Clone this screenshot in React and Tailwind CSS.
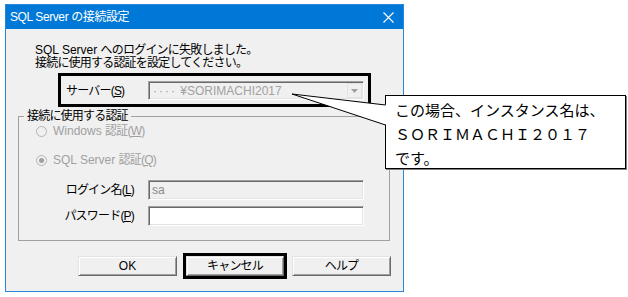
export default function App() {
  const btn =
    "flex items-center justify-center h-[20px] bg-[#f0f0f0] border border-t-[#e3e3e3] border-l-[#e3e3e3] border-r-[#696969] border-b-[#696969] shadow-[inset_1px_1px_0_#ffffff,inset_-1px_-1px_0_#a0a0a0] text-[12px] leading-none";
  const sunken =
    "border border-t-[#a0a0a0] border-l-[#a0a0a0] border-r-[#ffffff] border-b-[#ffffff] shadow-[inset_1px_1px_0_#696969,inset_-1px_-1px_0_#e3e3e3]";
  return (
    <div className="relative w-[628px] h-[297px] bg-white pt-[4px] pl-[5px] font-['Liberation_Sans','Noto_Sans_CJK_JP',sans-serif] text-[12px] text-black tracking-[-0.8px]">
      <div className="w-[399px] h-[288px] border border-[#2b86d9] bg-[#f0f0f0] flex flex-col">
        {/* title bar */}
        <div className="h-[24px] bg-[#0078d7] flex items-center justify-between pl-[4px] pr-[9px] text-white tracking-[-0.4px]">
          <span className="leading-none">SQL Server の接続設定</span>
          <svg width="11" height="11" viewBox="0 0 11 11">
            <path d="M0.5 0.5 L10.5 10.5 M10.5 0.5 L0.5 10.5" stroke="#ffffff" strokeWidth="1.1" fill="none" />
          </svg>
        </div>
        {/* message */}
        <div className="pt-[15px] pl-[29px] leading-[13px]">
          <div>
            <span className="tracking-normal">SQL Server </span>へのログインに失敗しました。
          </div>
          <div>接続に使用する認証を設定してください。</div>
        </div>
        {/* server row (highlighted) */}
        <div className="mt-[3px] ml-[52px] w-[313px] h-[34px] border-[3px] border-black flex items-center pl-[5px] pt-[1px]">
          <span className="w-[82px] leading-none">
            サーバー(<span className="underline">S</span>)
          </span>
          <div className={"w-[216px] h-[19px] bg-[#f0f0f0] flex items-center justify-between " + sunken}>
            <span className="pl-[4px] text-[#a0a0a0] leading-none tracking-normal">
              <span className="tracking-[2px]">····</span> ¥SORIMACHI2017
            </span>
            <div className="w-[15px] h-[15px] mr-[1px] bg-[#f0f0f0] border border-[#e3e3e3] flex items-center justify-center">
              <svg width="7" height="4" viewBox="0 0 7 4">
                <path d="M0 0 L7 0 L3.5 4 Z" fill="#a0a0a0" />
              </svg>
            </div>
          </div>
        </div>
        {/* group box */}
        <fieldset className="mt-[2px] ml-[12px] w-[372px] h-[132px] border border-[#a0a0a0] p-0 m-0">
          <legend className="ml-[5px] px-[3px] leading-[14px]">接続に使用する認証</legend>
          <div className="flex flex-col pl-[17px] text-[#a0a0a0]">
            <div className="h-[16px] flex items-center gap-[6px]">
              <span className="w-[11px] h-[11px] rounded-full border border-[#b5b5b5] bg-[#f0f0f0]" />
              <span className="leading-none">
                <span className="tracking-normal">Windows </span>認証(<span className="underline">W</span>)
              </span>
            </div>
            <div className="h-[16px] mt-[13px] flex items-center gap-[6px]">
              <span className="w-[11px] h-[11px] rounded-full border border-[#b5b5b5] bg-[#f0f0f0] flex items-center justify-center">
                <span className="w-[5px] h-[5px] rounded-full bg-[#a0a0a0]" />
              </span>
              <span className="leading-none">
                <span className="tracking-normal">SQL Server </span>認証(<span className="underline">Q</span>)
              </span>
            </div>
          </div>
          <div className="mt-[12px] flex items-center pl-[40px]">
            <span className="w-[75px] text-right leading-none">
              ログイン名(<span className="underline">L</span>)
            </span>
            <div className={"ml-[14px] w-[216px] h-[20px] bg-[#f0f0f0] flex items-center pl-[3px] text-[#8a8a8a] tracking-normal " + sunken}>
              sa
            </div>
          </div>
          <div className="mt-[6px] flex items-center pl-[40px]">
            <span className="w-[75px] text-right leading-none">
              パスワード(<span className="underline">P</span>)
            </span>
            <div className={"ml-[14px] w-[216px] h-[20px] bg-white " + sunken} />
          </div>
        </fieldset>
        {/* buttons */}
        <div className="mt-[12px] ml-[72px] flex items-center">
          <div className={btn + " w-[99px] tracking-normal"}>OK</div>
          <div className="ml-[6px] w-[104px] h-[26px] border-[3px] border-black flex items-center justify-center">
            <div className={btn + " w-[98px]"}>キャンセル</div>
          </div>
          <div className={btn + " ml-[5px] w-[99px]"}>ヘルプ</div>
        </div>
      </div>

      {/* callout */}
      <div className="absolute left-[385px] top-[95px] w-[241px] h-[74px] border border-black bg-white shadow-[1px_1px_0_#7f7f7f] pl-[9px] pt-[2px] text-[15px] leading-[24px] tracking-normal font-['Noto_Sans_CJK_JP',sans-serif]">
        <div>この場合、インスタンス名は、</div>
        <div>ＳＯＲＩＭＡＣＨＩ２０１７</div>
        <div>です。</div>
      </div>
      <svg className="absolute left-[290px] top-[92px]" width="100" height="36" viewBox="0 0 100 36">
        <polygon points="2,2 97,13 97,33" fill="#ffffff" />
        <polyline points="95.5,13 2,2 95.5,33" fill="none" stroke="#000000" strokeWidth="1" />
      </svg>
    </div>
  );
}
